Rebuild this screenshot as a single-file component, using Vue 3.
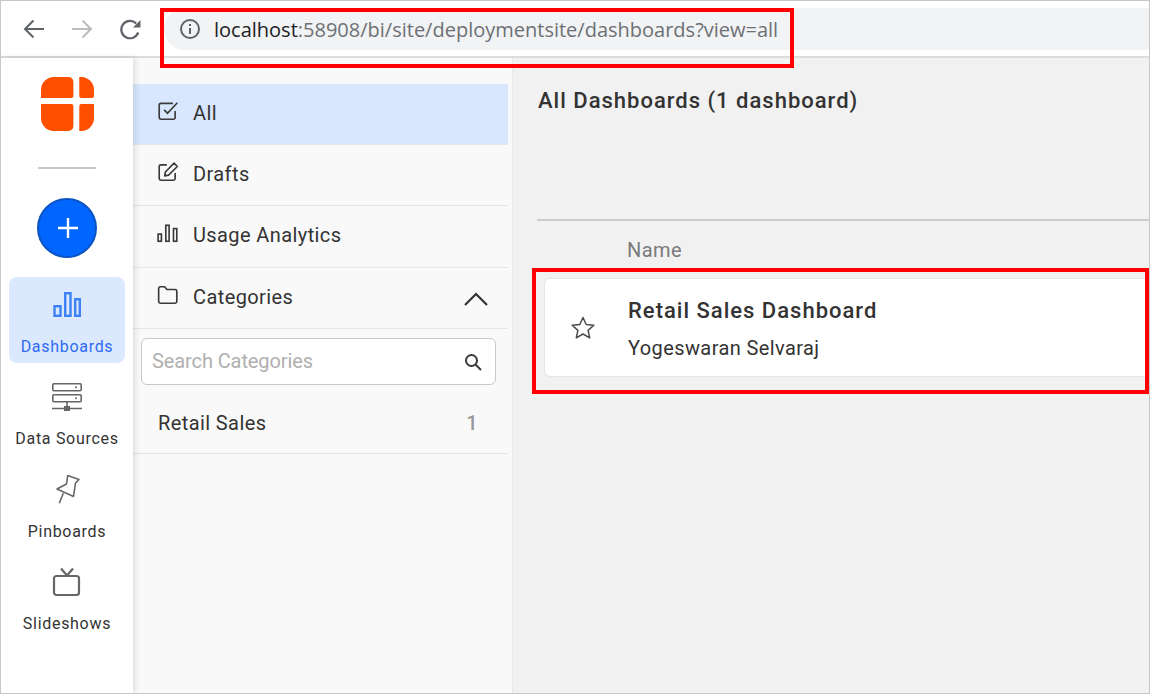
<script setup>
const navItems = [
  { label: 'Data Sources', icon: 'server' },
  { label: 'Pinboards', icon: 'pin' },
  { label: 'Slideshows', icon: 'tv' }
]
</script>

<template>
  <div class="page">
    <header class="chrome">
      <svg class="nav-icon" viewBox="0 0 24 24" fill="none" stroke="#5f6368" stroke-width="2"><path d="M22 12H3M11.500 3.500L3 12l8.500 8.500" /></svg>
      <svg class="nav-icon fwd" viewBox="0 0 24 24" fill="none" stroke="#babcbe" stroke-width="2"><path d="M2 12h19M12.500 3.500L21 12l-8.500 8.500" /></svg>
      <svg class="nav-icon reload" viewBox="0 0 24 24" fill="none"><path d="M20.200 15.500A8.700 8.700 0 1 1 18.200 6.400" stroke="#5f6368" stroke-width="2.200" /><path d="M22.500 3v7.500H15z" fill="#5f6368" /></svg>
      <div class="address">
        <svg class="info" viewBox="0 0 22 22" fill="none"><circle cx="11" cy="11" r="9" stroke="#5f6368" stroke-width="2" /><path d="M11 10v6M11 6v2" stroke="#5f6368" stroke-width="2" /></svg>
        <span class="url"><span class="host">localhost</span>:58908/bi/site/deploymentsite/dashboards?view=all</span>
      </div>
    </header>

    <div class="body">
      <aside class="rail">
        <svg class="logo" viewBox="0 0 54 54" preserveAspectRatio="none"><path d="M13 0h15a5 5 0 0 1 5 5v14a2 2 0 0 1-2 2H0v-8A13 13 0 0 1 13 0zM39 0h2a13 13 0 0 1 13 13v6a2 2 0 0 1-2 2H41a2 2 0 0 1-2-2zM0 27h31a2 2 0 0 1 2 2v20a5 5 0 0 1-5 5H13A13 13 0 0 1 0 41zM41 27h13v14a13 13 0 0 1-13 13h-2V29a2 2 0 0 1 2-2z" fill="#ff5000" /></svg>
        <div class="rail-line"></div>
        <div class="add">
          <svg class="plus" viewBox="0 0 22 22" width="22" height="22"><path d="M11 1v20M1 11h20" stroke="#fff" stroke-width="2.400" /></svg>
        </div>
        <div class="rail-item active">
          <svg class="rail-icon" viewBox="0 0 30 30" fill="none" stroke="#3c82f6" stroke-width="2.400"><rect x="2.500" y="17.200" width="6" height="9.600" /><rect x="13.200" y="4.200" width="5.300" height="22.600" /><rect x="23.200" y="10.200" width="4.600" height="16.600" /></svg>
          <span>Dashboards</span>
        </div>
        <div v-for="item in navItems" :key="item.label" class="rail-item" :class="item.icon">
          <svg v-if="item.icon === 'server'" class="rail-icon" viewBox="0 0 30 30" fill="none" stroke="#666" stroke-width="1.600"><rect x="0.800" y="0.800" width="28.400" height="7" rx="1" /><rect x="0.800" y="11.800" width="28.400" height="7" rx="1" /><path d="M15 19v5M0 25.500h30" /><rect x="12" y="23" width="6" height="5" fill="#666" stroke="none" /><circle cx="24" cy="4.300" r="1" fill="#666" stroke="none" /><circle cx="24" cy="15.300" r="1" fill="#666" stroke="none" /></svg>
          <svg v-else-if="item.icon === 'pin'" class="rail-icon" viewBox="0 0 30 30" fill="none" stroke="#666" stroke-width="1.600"><path d="M15.700 0.500L27 4.500 23.500 8 21.500 21.500 5 14 14.500 9z" stroke-linejoin="round" /><path d="M11.300 18.300L7.300 28.300" /></svg>
          <svg v-else class="rail-icon" viewBox="0 0 30 30" fill="none" stroke="#666" stroke-width="2.200"><rect x="2" y="9" width="25" height="19" rx="2.500" /><path d="M9 1.500l6 7 6-7" /></svg>
          <span>{{ item.label }}</span>
        </div>
      </aside>

      <nav class="panel">
        <div class="row selected">
          <svg class="row-icon" viewBox="0 0 20 20" fill="none" stroke="#3a3a3a" stroke-width="1.500"><path d="M16.500 10v6a1.500 1.500 0 0 1-1.500 1.500H3.500A1.500 1.500 0 0 1 2 16V4.500A1.500 1.500 0 0 1 3.500 3h11" /><path d="M6.500 9l3 3L18.500 2.500" /></svg>
          <span>All</span>
        </div>
        <div class="row">
          <svg class="row-icon" viewBox="0 0 20 20" fill="none" stroke="#3a3a3a" stroke-width="1.500"><path d="M16.500 11v5a1.500 1.500 0 0 1-1.500 1.500H3.500A1.500 1.500 0 0 1 2 16V5a1.500 1.500 0 0 1 1.500-1.500H9" /><path d="M7 13.500l.6-3.500L15.500 2l3 3-8 7.800z" stroke-linejoin="round" /></svg>
          <span>Drafts</span>
        </div>
        <div class="row tall">
          <svg class="row-icon" viewBox="0 0 20 20" fill="none" stroke="#3a3a3a" stroke-width="1.500"><rect x="1" y="11" width="3" height="6.500" /><rect x="8" y="3" width="3" height="14.500" /><rect x="15" y="6" width="3" height="11.500" /></svg>
          <span>Usage Analytics</span>
        </div>
        <div class="row">
          <svg class="row-icon" viewBox="0 0 20 20" fill="none" stroke="#3a3a3a" stroke-width="1.500"><path d="M1.500 4a1.500 1.500 0 0 1 1.500-1.500h4l2 2.500h7.500A1.500 1.500 0 0 1 18 6.500V16a1.500 1.500 0 0 1-1.500 1.500H3A1.500 1.500 0 0 1 1.500 16z" stroke-linejoin="round" /></svg>
          <span>Categories</span>
          <svg class="chevron" viewBox="0 0 24 14" fill="none" stroke="#333" stroke-width="2.200"><path d="M1 13L12 2l11 11" /></svg>
        </div>
        <div class="search">
          <span class="placeholder">Search Categories</span>
          <svg viewBox="0 0 18 18" width="18" height="18" fill="none" stroke="#3a3a3a" stroke-width="2"><circle cx="7.500" cy="7.500" r="5.500" /><path d="M11.500 11.500L17 17" /></svg>
        </div>
        <div class="category">
          <span>Retail Sales</span>
          <span class="count">1</span>
        </div>
      </nav>

      <main class="main">
        <h1>All Dashboards (1 dashboard)</h1>
        <div class="rule"></div>
        <div class="col-head">Name</div>
        <div class="card">
          <svg class="star" viewBox="0 0 26 26" fill="none" stroke="#4a4a4a" stroke-width="1.500"><path d="M13 2.500l3.200 7 7.600.8-5.700 5.100 1.600 7.500L13 19l-6.700 3.900 1.600-7.500-5.700-5.100 7.600-.8z" stroke-linejoin="round" /></svg>
          <div class="card-text">
            <div class="card-title">Retail Sales Dashboard</div>
            <div class="card-sub">Yogeswaran Selvaraj</div>
          </div>
        </div>
      </main>
    </div>

    <div class="mark mark-url"></div>
    <div class="mark mark-card"></div>
  </div>
</template>

<style>
html, body { margin: 0; padding: 0; }
</style>

<style scoped>
.page {
  position: relative;
  box-sizing: border-box;
  width: 1150px;
  height: 694px;
  overflow: hidden;
  display: flex;
  flex-direction: column;
  border: 1px solid #c8c8c8;
  font-family: Roboto, "Liberation Sans", sans-serif;
  color: #333;
}
.chrome {
  box-sizing: border-box;
  height: 57px;
  flex: none;
  display: flex;
  align-items: center;
  background: #fff;
  border-bottom: 2px solid #dadce0;
  padding: 1px 0 0 21px;
}
.nav-icon { width: 24px; height: 24px; flex: none; }
.fwd { margin-left: 24px; }
.reload { margin-left: 24px; }
.address {
  margin-left: 22px;
  flex: 1;
  height: 42px;
  border-radius: 21px 0 0 21px;
  background: #f1f3f4;
  display: flex;
  align-items: center;
  padding-left: 15px;
}
.info { width: 22px; height: 22px; flex: none; }
.url {
  margin-left: 13px;
  font-family: "Open Sans", sans-serif;
  font-size: 20px;
  color: #6d7074;
  white-space: nowrap;
}
.host { color: #202124; }
.body { flex: 1; display: flex; min-height: 0; }
.rail {
  width: 132px;
  flex: none;
  background: #fff;
  box-shadow: 2px 0 6px rgba(0, 0, 0, 0.12);
  position: relative;
  z-index: 1;
  display: flex;
  flex-direction: column;
  align-items: center;
  padding-top: 19px;
  box-sizing: border-box;
}
.logo { width: 53px; height: 54px; flex: none; margin-left: 1px; }
.rail-line { width: 58px; height: 2px; background: #c8c8c8; margin-top: 36px; }
.add {
  box-sizing: border-box;
  width: 60px;
  height: 60px;
  margin-top: 29px;
  border-radius: 50%;
  background: #0066ff;
  border: 2px solid #0a54c2;
  display: flex;
  align-items: center;
  justify-content: center;
}
.plus { margin-left: 2px; }
.rail-item {
  box-sizing: border-box;
  width: 116px;
  height: 92px;
  flex: none;
  display: flex;
  flex-direction: column;
  align-items: center;
  padding-top: 19px;
  font-size: 16px;
  color: #333;
  letter-spacing: 0.7px;
  white-space: nowrap;
}
.rail-item.active {
  height: 86px;
  margin-top: 19px;
  margin-bottom: 1px;
  padding-top: 12px;
  border-radius: 8px;
  background: #dbe8fd;
  color: #2d6bf6;
}
.rail-icon { width: 30px; height: 30px; flex: none; margin-bottom: 17px; }
.rail-item.server .rail-icon { margin-bottom: 16px; }
.rail-item.active .rail-icon { margin-bottom: 18px; }
.panel {
  width: 380px;
  flex: none;
  box-sizing: border-box;
  background: #f9f9f9;
  padding: 26px 4px 0 0;
  border-right: 1px solid #e8e8e8;
}
.row {
  box-sizing: border-box;
  height: 61px;
  display: flex;
  align-items: center;
  padding: 0 0 2px 24px;
  font-size: 20px;
  letter-spacing: 0.4px;
  border-bottom: 1px solid #e4e4e4;
}
.row.tall { height: 62px; padding-bottom: 4px; }
.row.selected { background: #d8e7fd; }
.row > span { margin-left: 14px; }
.row-icon { width: 22px; height: 22px; flex: none; margin-bottom: 4px; }
.chevron { width: 24px; height: 14px; margin: 3px 20px 0 auto; }
.search {
  box-sizing: border-box;
  height: 47px;
  margin: 9px 12px 0 8px;
  background: #fff;
  border: 1px solid #c8c8c8;
  border-radius: 6px;
  display: flex;
  align-items: center;
  justify-content: space-between;
  padding: 0 13px 0 10px;
  font-size: 20px;
}
.placeholder { color: #b0b0b0; letter-spacing: -0.1px; margin-bottom: 2px; }
.category {
  box-sizing: border-box;
  height: 69px;
  display: flex;
  align-items: center;
  justify-content: space-between;
  padding: 7px 30px 0 25px;
  font-size: 20px;
  letter-spacing: 0.4px;
  border-bottom: 1px solid #e4e4e4;
}
.count { color: #999; font-weight: 500; }
.main { flex: 1; min-width: 0; background: #f1f1f1; padding-left: 24px; }
h1 {
  margin: 29px 0 0 1px;
  font-size: 22px;
  line-height: 28px;
  font-weight: 500;
  letter-spacing: 1px;
  color: #333;
}
.rule { height: 2px; background: #cccccc; margin-top: 104px; }
.col-head {
  margin: 17px 0 0 90px;
  line-height: 24px;
  font-size: 20px;
  letter-spacing: 0.4px;
  color: #7a7a7a;
}
.card {
  box-sizing: border-box;
  height: 99px;
  margin: 16px 0 0 7px;
  display: flex;
  align-items: center;
  background: #fff;
  border: 1px solid #e6e6e6;
  border-right: 0;
  border-radius: 6px 0 0 6px;
}
.star { width: 26px; height: 26px; flex: none; margin-left: 25px; }
.card-text { margin-left: 32px; padding-top: 2px; }
.card-title {
  font-size: 22px;
  line-height: 28px;
  font-weight: 500;
  letter-spacing: 1px;
}
.card-sub {
  font-size: 20px;
  line-height: 24px;
  margin-top: 11px;
  letter-spacing: 0.4px;
}
.mark { position: absolute; box-sizing: border-box; border: 4px solid #f00; }
.mark-url { left: 159px; top: 7px; width: 634px; height: 60px; }
.mark-card { left: 531px; top: 267px; width: 617px; height: 126px; }
</style>
